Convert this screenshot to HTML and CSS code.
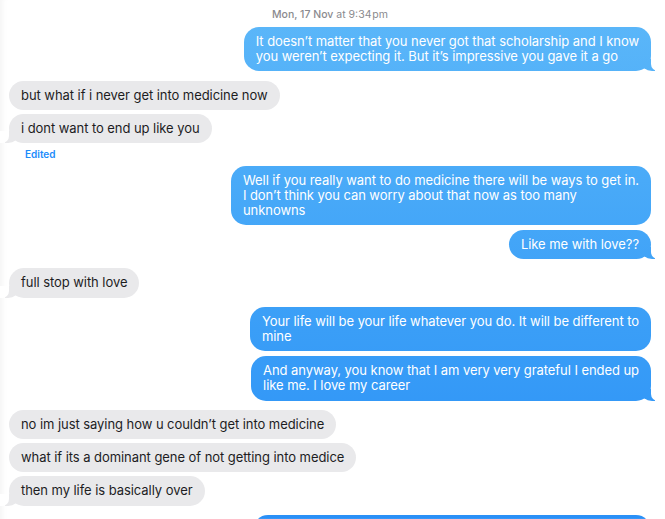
FILE: index.html
```html
<!DOCTYPE html>
<html>
<head>
<meta charset="utf-8">
<link rel="stylesheet" href="styles.css">
</head>
<body>
<div class="chat">
	<div class="stamp"><b>Mon, 17 Nov</b> at 9:34&#8202;pm</div>

	<div class="group sent">
		<div class="msg tail">It doesn’t matter that you never got that scholarship and I know<br>you weren’t expecting it. But it’s impressive you gave it a go</div>
	</div>

	<div class="group recv">
		<div class="msg">but what if i never get into medicine now</div>
		<div class="msg tail">i dont want to end up like you</div>
		<div class="edited">Edited</div>
	</div>

	<div class="group sent">
		<div class="msg">Well if you really want to do medicine there will be ways to get in.<br>I don’t think you can worry about that now as too many<br>unknowns</div>
		<div class="msg tail">Like me with love??</div>
	</div>

	<div class="group recv">
		<div class="msg tail">full stop with love</div>
	</div>

	<div class="group sent">
		<div class="msg">Your life will be your life whatever you do. It will be different to<br>mine</div>
		<div class="msg tail">And anyway, you know that I am very very grateful I ended up<br>like me. I love my career</div>
	</div>

	<div class="group recv">
		<div class="msg">no im just saying how u couldn’t get into medicine</div>
		<div class="msg">what if its a dominant gene of not getting into medice</div>
		<div class="msg tail">then my life is basically over</div>
	</div>

	<div class="group sent">
		<div class="msg wide">&nbsp;<br>&nbsp;</div>
	</div>
</div>
</body>
</html>
```

FILE: styles.css
```css
html, body {
	margin: 0;
	background: #fff;
	overflow: hidden;
}
body {
	font-family: Inter, "Liberation Sans", sans-serif;
	font-size: 13px;
	color: #1d1d1f;
	box-shadow: inset 7px 0 6px -5px rgba(0,0,0,0.05);
	min-height: 519px;
}
.chat {
	padding: 8px 14px 0 9px;
	display: flex;
	flex-direction: column;
	gap: 9.5px;
}
.stamp {
	text-align: center;
	font-size: 10.5px;
	color: #8a8a8e;
	line-height: 13px;
	margin-bottom: -3.5px;
}
.stamp b {
	font-weight: 500;
}
.group {
	display: flex;
	flex-direction: column;
	gap: 4px;
}
.sent {
	align-items: flex-end;
	gap: 5px;
}
.recv {
	align-items: flex-start;
}
.msg {
	position: relative;
	padding: 7px 12px 7.2px;
	line-height: 15px;
	border-radius: 15px;
	white-space: nowrap;
	letter-spacing: -0.06px;
}
.msg.wide {
	width: 374px;
}
.sent .msg {
	color: #fff;
	background: linear-gradient(#5db8f9 0px, #49aaf8 180px, #3a9ef7 330px, #2a90f7 519px);
	background-attachment: fixed;
}
.recv .msg {
	background: #e9e9eb;
}
.msg.tail::before,
.msg.tail::after {
	content: "";
	position: absolute;
	bottom: 0;
	height: 12px;
}
.sent .msg.tail::before {
	right: -4px;
	width: 14px;
	background: inherit;
	border-bottom-left-radius: 11px 9px;
}
.sent .msg.tail::after {
	right: -10px;
	width: 10px;
	background: #fff;
	border-bottom-left-radius: 7px;
}
.recv .msg.tail::before {
	left: -4px;
	width: 14px;
	background: #e9e9eb;
	border-bottom-right-radius: 11px 9px;
}
.recv .msg.tail::after {
	left: -10px;
	width: 10px;
	background: #fff;
	border-bottom-right-radius: 7px;
}
.edited {
	font-size: 10px;
	font-weight: 600;
	line-height: 12px;
	color: #1b8cfb;
	margin: 1px 0 -4px 16px;
}
```
